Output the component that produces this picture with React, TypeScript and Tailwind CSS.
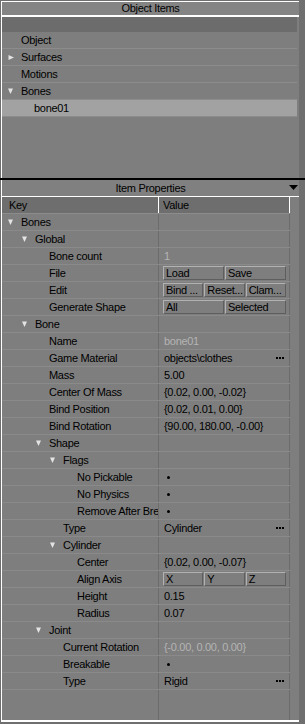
import React from 'react';

type Cell =
  | { kind: 'text'; text: string; dim?: boolean; more?: boolean }
  | { kind: 'dot' }
  | { kind: 'buttons'; labels: string[] }
  | { kind: 'none' };

interface PropRow {
  label: string;
  depth: number;
  group?: boolean;
  value: Cell;
}

const none: Cell = { kind: 'none' };

const rows: PropRow[] = [
  { label: 'Bones', depth: 0, group: true, value: none },
  { label: 'Global', depth: 1, group: true, value: none },
  { label: 'Bone count', depth: 2, value: { kind: 'text', text: '1', dim: true } },
  { label: 'File', depth: 2, value: { kind: 'buttons', labels: ['Load', 'Save'] } },
  { label: 'Edit', depth: 2, value: { kind: 'buttons', labels: ['Bind ...', 'Reset...', 'Clam...'] } },
  { label: 'Generate Shape', depth: 2, value: { kind: 'buttons', labels: ['All', 'Selected'] } },
  { label: 'Bone', depth: 1, group: true, value: none },
  { label: 'Name', depth: 2, value: { kind: 'text', text: 'bone01', dim: true } },
  { label: 'Game Material', depth: 2, value: { kind: 'text', text: 'objects\\clothes', more: true } },
  { label: 'Mass', depth: 2, value: { kind: 'text', text: '5.00' } },
  { label: 'Center Of Mass', depth: 2, value: { kind: 'text', text: '{0.02, 0.00, -0.02}' } },
  { label: 'Bind Position', depth: 2, value: { kind: 'text', text: '{0.02, 0.01, 0.00}' } },
  { label: 'Bind Rotation', depth: 2, value: { kind: 'text', text: '{90.00, 180.00, -0.00}' } },
  { label: 'Shape', depth: 2, group: true, value: none },
  { label: 'Flags', depth: 3, group: true, value: none },
  { label: 'No Pickable', depth: 4, value: { kind: 'dot' } },
  { label: 'No Physics', depth: 4, value: { kind: 'dot' } },
  { label: 'Remove After Break', depth: 4, value: { kind: 'dot' } },
  { label: 'Type', depth: 3, value: { kind: 'text', text: 'Cylinder', more: true } },
  { label: 'Cylinder', depth: 3, group: true, value: none },
  { label: 'Center', depth: 4, value: { kind: 'text', text: '{0.02, 0.00, -0.07}' } },
  { label: 'Align Axis', depth: 4, value: { kind: 'buttons', labels: ['X', 'Y', 'Z'] } },
  { label: 'Height', depth: 4, value: { kind: 'text', text: '0.15' } },
  { label: 'Radius', depth: 4, value: { kind: 'text', text: '0.07' } },
  { label: 'Joint', depth: 2, group: true, value: none },
  { label: 'Current Rotation', depth: 3, value: { kind: 'text', text: '{-0.00, 0.00, 0.00}', dim: true } },
  { label: 'Breakable', depth: 3, value: { kind: 'dot' } },
  { label: 'Type', depth: 3, value: { kind: 'text', text: 'Rigid', more: true } },
];

// text x for each depth; group rows put the arrow 14px to the left of it
const indents = ['pl-[19px]', 'pl-[33px]', 'pl-[47px]', 'pl-[61px]', 'pl-[75px]'];
const arrowIndents = ['pl-[6px]', 'pl-[20px]', 'pl-[34px]', 'pl-[48px]', 'pl-[62px]'];

const Down = () => (
  <svg width="5" height="6" viewBox="0 0 5 6" className="shrink-0 mr-[8px]">
    <path d="M0 0.5h5L2.5 6z" fill="#e4e4e4" />
  </svg>
);

const Right = () => (
  <svg width="6" height="5" viewBox="0 0 6 5" className="shrink-0 mr-[7px]">
    <path d="M0.5 0v5L6 2.5z" fill="#e4e4e4" />
  </svg>
);

const More = () => (
  <span className="ml-auto mr-[5px] flex gap-[1px]">
    <i className="block w-[2px] h-[2px] bg-black" />
    <i className="block w-[2px] h-[2px] bg-black" />
    <i className="block w-[2px] h-[2px] bg-black" />
  </span>
);

const ValueCell = ({ cell }: { cell: Cell }) => {
  if (cell.kind === 'none') return null;
  if (cell.kind === 'dot')
    return <span className="pl-[8px] flex items-center"><i className="block w-[3px] h-[3px] rounded-full bg-black" /></span>;
  if (cell.kind === 'buttons')
    return (
      <div className="flex w-full h-full pl-[4px] pr-[3px] py-[1px] gap-[1px]">
        {cell.labels.map((b, i) => (
          <div
            key={i}
            className="flex-1 min-w-0 flex items-center pl-[2px] overflow-hidden whitespace-nowrap border border-t-[#b2b2b2] border-l-[#b2b2b2] border-r-[#5e5e5e] border-b-[#5e5e5e] bg-[#7e7e7e]"
          >
            {b}
          </div>
        ))}
      </div>
    );
  return (
    <div className="flex items-center w-full pl-[5px]">
      <span className={cell.dim ? 'text-[#b4b4b4]' : ''}>{cell.text}</span>
      {cell.more && <More />}
    </div>
  );
};

export default function App() {
  return (
    <div
      className="w-[305px] h-[724px] bg-[#6f6f6f] text-black text-[11px] tracking-[-0.3px] leading-none overflow-hidden flex flex-col"
      style={{ fontFamily: '"Liberation Sans", Arial, sans-serif' }}
    >
      {/* Object Items */}
      <div className="mx-[1px] mt-[1px] border-l border-t border-white bg-[#7e7e7e] w-[298px] h-[177px] flex flex-col">
        <div className="h-[15px] flex items-center justify-center bg-[#848484] border-b-2 border-white">Object Items</div>
        <div className="h-[15px] bg-[#6c6c6c] mr-[2px]" />
        <div className="mr-[2px] flex flex-col">
          {[
            { t: 'Object', icon: null, pl: 'pl-[19px]' },
            { t: 'Surfaces', icon: <Right />, pl: 'pl-[6px]' },
            { t: 'Motions', icon: null, pl: 'pl-[19px]' },
            { t: 'Bones', icon: <Down />, pl: 'pl-[6px]' },
          ].map((r) => (
            <div key={r.t} className={`h-[17px] flex items-center border-b border-[#8c8c8c] ${r.pl}`}>
              {r.icon}
              <span>{r.t}</span>
            </div>
          ))}
          <div className="h-[17px] flex items-center pl-[32px] bg-[#a2a2a2] border-b border-[#8c8c8c]">bone01</div>
        </div>
      </div>

      <div className="h-[2px] bg-black" />

      {/* Item Properties */}
      <div className="mx-[1px] border-l border-white bg-[#7e7e7e] w-[298px] flex-1 flex flex-col border-b-2 border-b-white mb-[2px]">
        <div className="h-[17px] flex items-center justify-center relative bg-[#808080] border-b border-white">
          Item Properties
          <svg width="9" height="6" viewBox="0 0 9 6" className="absolute right-[1px] top-[5px]">
            <path d="M0 0h9L4.5 5z" fill="#000" />
          </svg>
        </div>
        <div className="flex-1 flex mr-[1px]">
          <div className="w-[288px] flex flex-col">
            <div className="h-[17px] flex bg-[#6e6e6e] border-b border-[#8c8c8c]">
              <div className="w-[157px] pl-[7px] flex items-center border-r border-white">Key</div>
              <div className="flex-1 pl-[4px] flex items-center border-r border-white">Value</div>
            </div>
            {rows.map((r, i) => (
              <div key={i} className="h-[17px] flex border-b border-[#8a8a8a]">
                <div
                  className={`w-[157px] flex items-center overflow-hidden whitespace-nowrap border-r border-[#6c6c6c] ${r.group ? arrowIndents[r.depth] : indents[r.depth]}`}
                >
                  {r.group && <Down />}
                  <span>{r.label}</span>
                </div>
                <div className="flex-1 flex items-center border-r border-[#6c6c6c]">
                  <ValueCell cell={r.value} />
                </div>
              </div>
            ))}
            <div className="flex-1 flex">
              <div className="w-[157px] border-r border-[#6c6c6c]" />
              <div className="flex-1 border-r border-[#6c6c6c]" />
            </div>
          </div>
          <div className="flex-1 bg-[#7e7e7e]" />
        </div>
      </div>
    </div>
  );
}
